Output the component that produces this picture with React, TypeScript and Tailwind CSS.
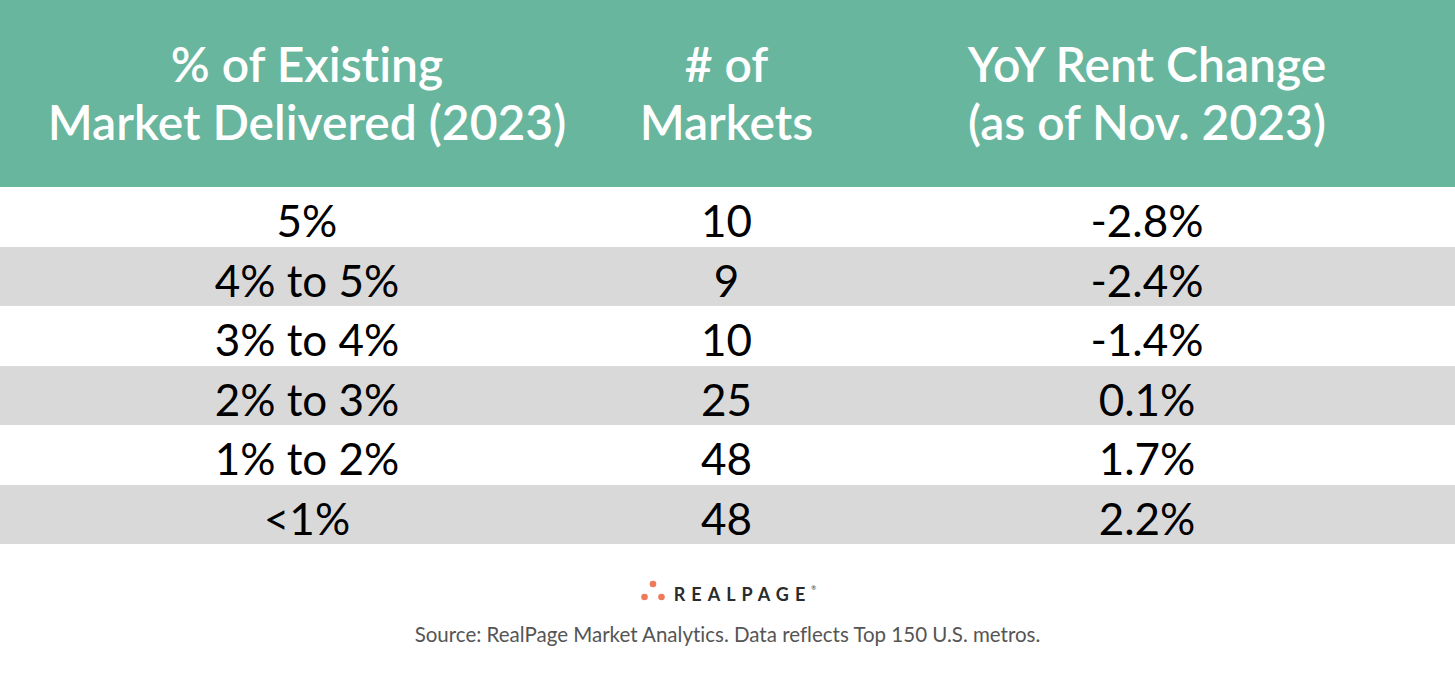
const rows = [
  ['5%', '10', '-2.8%'],
  ['4% to 5%', '9', '-2.4%'],
  ['3% to 4%', '10', '-1.4%'],
  ['2% to 3%', '25', '0.1%'],
  ['1% to 2%', '48', '1.7%'],
  ['<1%', '48', '2.2%'],
]

export default function App() {
  return (
    <div className="w-[1455px] h-[686px] bg-white font-['Lato','Noto_Sans',sans-serif] text-black [font-variant-ligatures:none]">
      {/* Header */}
      <div className="grid grid-cols-[614px_225px_1fr] h-[187px] bg-[#68b69e] text-white text-[48px] font-semibold leading-[58px] items-center text-center pb-[2px]">
        <div>% of Existing<br />Market Delivered (2023)</div>
        <div># of<br />Markets</div>
        <div>YoY Rent Change<br />(as of Nov. 2023)</div>
      </div>

      {/* Rows */}
      {rows.map((r, i) => (
        <div
          key={i}
          className={`grid grid-cols-[614px_225px_1fr] h-[59.5px] items-center text-center text-[44px] ${i % 2 === 1 ? 'bg-[#d9d9d9]' : 'bg-white'}`}
        >
          <div>{r[0]}</div>
          <div>{r[1]}</div>
          <div>{r[2]}</div>
        </div>
      ))}

      {/* Logo */}
      <div className="flex justify-center items-center gap-[9px] mt-[35px] ml-[2px]">
        <svg width="24" height="22" viewBox="0 0 24 22">
          <circle cx="12" cy="4" r="3.3" fill="#ef7a5a" />
          <circle cx="3.5" cy="17" r="3.3" fill="#ef7a5a" />
          <circle cx="20.5" cy="17" r="3.3" fill="#ef7a5a" />
        </svg>
        <div className="flex items-start pt-[6px]">
          <span className="text-[18px] font-bold tracking-[6px] text-[#2b2b2b] leading-none">REALPAGE</span>
          <span className="text-[6px] leading-none text-[#2b2b2b]">®</span>
        </div>
      </div>

      {/* Source */}
      <div className="text-center text-[20.5px] text-[#555] mt-[16px]">
        Source: RealPage Market Analytics. Data reflects Top 150 U.S. metros.
      </div>
    </div>
  )
}
